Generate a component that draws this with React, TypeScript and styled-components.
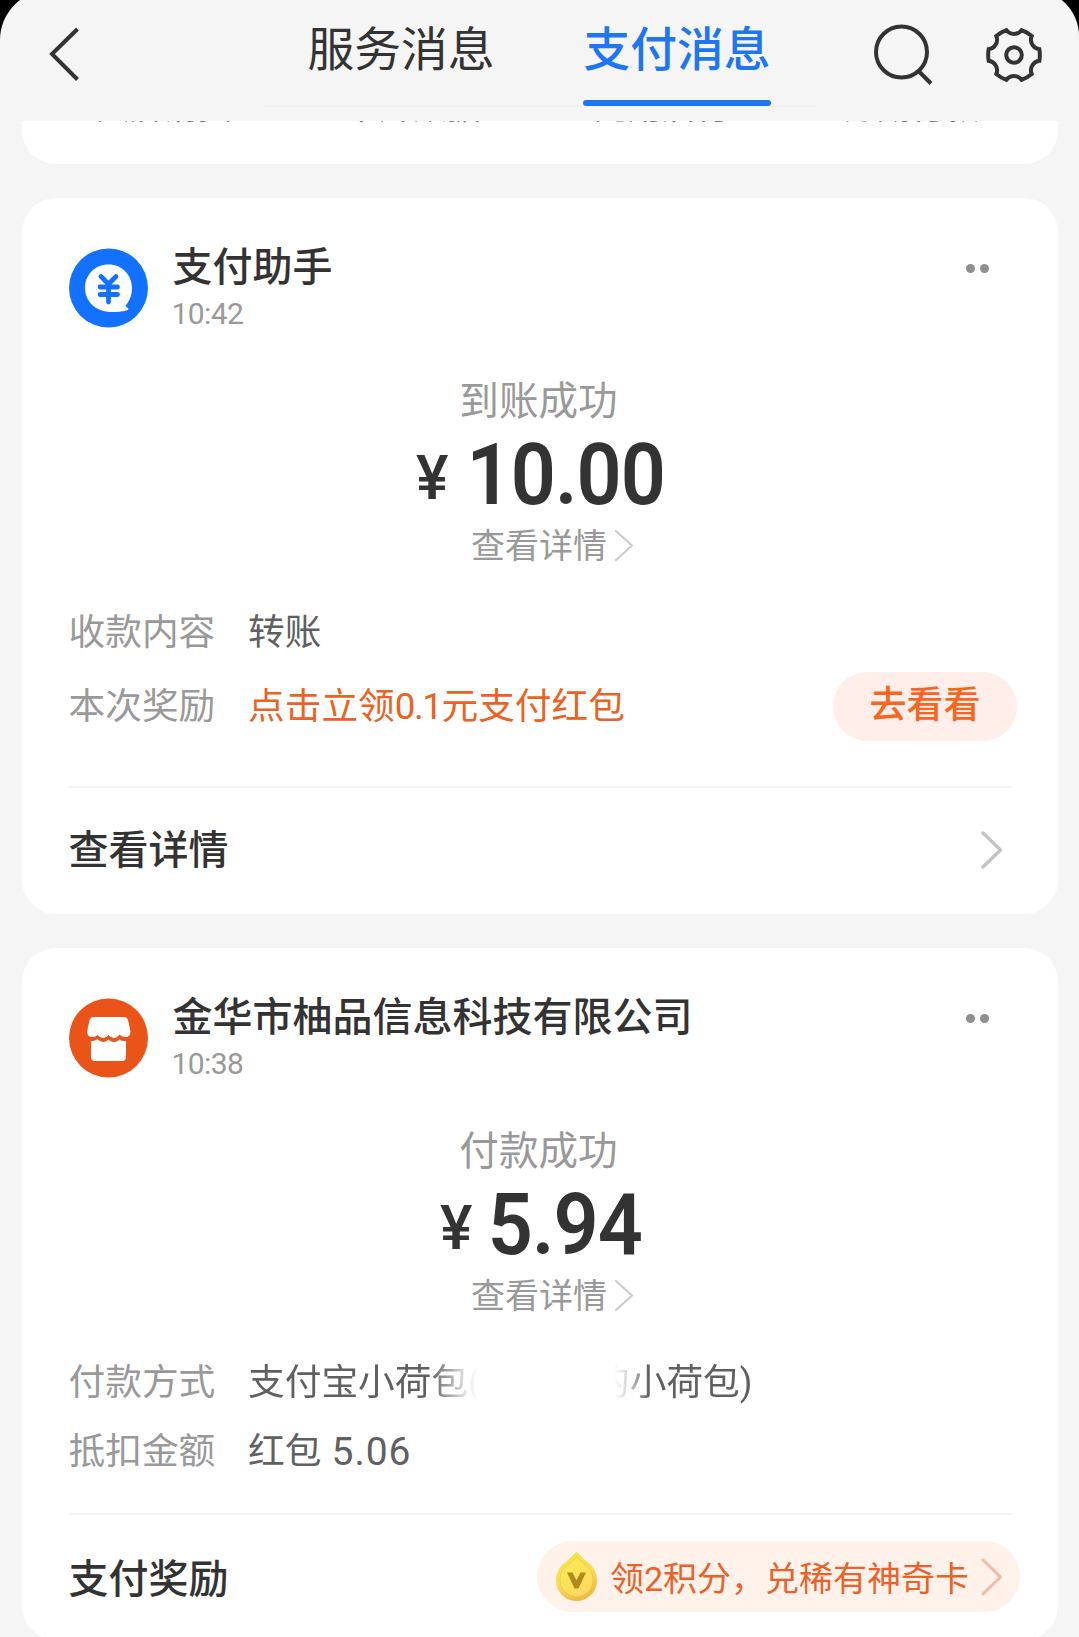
import React from "react";
import styled, { createGlobalStyle } from "styled-components";

const GlobalStyle = createGlobalStyle`
  *, *::before, *::after { box-sizing: border-box; }
  body {
    margin: 0;
    background: #000;
    font-family: Roboto, "Noto Sans CJK SC", sans-serif;
    color: #333;
  }
`;

const Screen = styled.main`
  width: 1079px;
  height: 1637px;
  overflow: hidden;
  display: flex;
  flex-direction: column;
  background: #f5f5f5;
`;

const Backdrop = styled.div`
  flex: none;
  height: 121px;
  overflow: hidden;
  background: #000;
`;

const Header = styled.header`
  height: 141px;
  margin-top: -10px;
  padding: 10px 36px 0 48px;
  border-radius: 50px 46px 0 0;
  background: #f5f5f5;
  display: flex;
  align-items: flex-start;
`;

const BackIcon = styled.svg`
  flex: none;
  margin-top: 26px;
`;

const Tabs = styled.nav`
  display: flex;
  width: 552px;
  height: 107px;
  margin-left: 182px;
  padding-left: 43px;
  border-bottom: 2px solid #f1f1f1;
`;

const Tab = styled.div<{ $active?: boolean }>`
  width: 188px;
  height: 106px;
  padding-top: 19px;
  margin-right: 88px;
  flex: none;
  text-align: center;
  white-space: nowrap;
  font-size: 46.8px;
  line-height: 62px;
  font-weight: ${(p) => (p.$active ? 500 : 400)};
  color: ${(p) => (p.$active ? "#1f77f0" : "#333")};

  &::after {
    content: "";
    display: block;
    height: 6px;
    margin-top: 18.5px;
    border-radius: 3px;
    background: ${(p) => (p.$active ? "#1f77f0" : "transparent")};
  }
`;

const Tools = styled.div`
  display: flex;
  gap: 50px;
  margin: 22px 0 0 56px;
`;

const Shortcuts = styled.section`
  flex: none;
  height: 43px;
  margin: 0 21px 0 22px;
  padding-left: 74px;
  border-radius: 0 0 34px 34px;
  background: #fff;
  overflow: hidden;
  display: flex;
  gap: 113px;
`;

const Shortcut = styled.span`
  flex: none;
  width: 136px;
  margin-top: -31px;
  font-size: 34px;
  line-height: 34px;
  color: #777;
  white-space: nowrap;
`;

const Card = styled.article<{ $height: number }>`
  flex: none;
  height: ${(p) => p.$height}px;
  margin: 34px 21px 0 22px;
  padding: 50px 41px 0 46px;
  border-radius: 34px;
  background: #fff;
  display: flex;
  flex-direction: column;
`;

const CardHead = styled.div`
  display: flex;
  height: 80px;
  padding-left: 1px;
`;

const HeadInfo = styled.div`
  flex: 1;
  margin: -2px 0 0 24.5px;
`;

const Sender = styled.h2`
  margin: 0;
  font-size: 40px;
  line-height: 44px;
  font-weight: 500;
`;

const Time = styled.time`
  display: block;
  margin: 8px 0 0 -1px;
  font-size: 30px;
  line-height: 32px;
  letter-spacing: -0.6px;
  color: #999;
`;

const More = styled.div`
  display: flex;
  gap: 5px;
  margin: 15.5px 28px 0 0;

  i {
    width: 9px;
    height: 9px;
    border-radius: 50%;
    background: #8f8f8f;
  }
`;

const Summary = styled.div`
  display: flex;
  flex-direction: column;
  align-items: center;
  margin-top: 52px;
  padding-right: 5px;
`;

const Status = styled.div`
  margin-right: 3px;
  font-size: 39.6px;
  line-height: 44px;
  color: #999;
`;

const Amount = styled.div`
  display: flex;
  align-items: center;
  height: 80px;
  margin-top: 11px;
  padding-left: 8px;
`;

const Yen = styled.span`
  padding-top: 7px;
  margin-right: 10px;
  font-size: 61px;
  line-height: 73px;
  font-weight: 500;
`;

const Digits = styled.span`
  font-size: 85px;
  line-height: 80px;
  font-weight: 600;
  letter-spacing: -1px;
  transform: scaleX(0.93);
`;

const DetailLink = styled.a`
  display: flex;
  align-items: center;
  gap: 7px;
  margin: 11px 0 39px 25px;
  font-size: 34px;
  line-height: 40px;
  color: #999;

  svg {
    margin-bottom: 2px;
  }
`;

const Row = styled.div<{ $gap?: number; $height?: number }>`
  display: flex;
  align-items: center;
  height: ${(p) => p.$height ?? 50}px;
  margin-top: ${(p) => p.$gap ?? 0}px;
  font-size: 36.7px;
  line-height: 50px;
  white-space: nowrap;
`;

const Label = styled.span<{ $drop?: number }>`
  width: 179.5px;
  margin-left: 0.5px;
  padding-top: ${(p) => p.$drop ?? 5}px;
  flex: none;
  color: #999;
`;

const Value = styled.span<{ $accent?: boolean }>`
  flex: 1;
  display: flex;
  padding-top: ${(p) => (p.$accent ? 2 : 5)}px;
  white-space: pre;
  color: ${(p) => (p.$accent ? "#ec6222" : "#606060")};
`;

const Tight = styled.span`
  letter-spacing: -1.4px;
`;

const Wide = styled.span`
  font-size: 39px;
  letter-spacing: 1px;
  margin-left: 1px;
`;

const FadeOut = styled.span`
  width: 230px;
  overflow: hidden;
  mask-image: linear-gradient(to right, #000 182px, rgba(0, 0, 0, 0.15) 219px, transparent 230px);
`;

const FadeIn = styled.span`
  margin-left: 115px;
  mask-image: linear-gradient(to right, transparent 21px, rgba(0, 0, 0, 0.25) 34px, #000 56px);
`;

const PillButton = styled.button`
  width: 184px;
  height: 69px;
  padding: 0 0 1px;
  border: 0;
  border-radius: 35px;
  background: #ffeee9;
  color: #f8651c;
  font: 500 37px/50px Roboto, "Noto Sans CJK SC", sans-serif;
`;

const Divider = styled.hr<{ $gap: number }>`
  flex: none;
  width: 943px;
  height: 2px;
  margin: ${(p) => p.$gap}px 0 0 1px;
  border: 0;
  background: #f4f4f4;
`;

const CardFoot = styled.div`
  flex: 1;
  display: flex;
  align-items: center;
  justify-content: space-between;
`;

const FootTitle = styled.strong<{ $drop?: number }>`
  padding-top: ${(p) => p.$drop ?? 0}px;
  padding-left: 0.5px;
  font-size: 40px;
  line-height: 50px;
  font-weight: 500;
`;

const FootArrow = styled.div`
  display: flex;
  margin: 0 15px 2px 0;
`;

const RewardPill = styled.div`
  display: flex;
  align-items: center;
  width: 483px;
  height: 71px;
  margin: 0 -3px 1px 0;
  padding-left: 18px;
  border-radius: 36px;
  background: #fff2eb;
  color: #e8622a;
  font-size: 34px;
  line-height: 50px;
  white-space: nowrap;

  span {
    flex: none;
    width: 357px;
    padding-top: 4px;
    margin: 0 14px 0 12px;
  }
`;

const Chevron = ({ w, h, color, stroke }: { w: number; h: number; color: string; stroke: number }) => (
  <svg width={w + 4} height={h + 4} viewBox={`-2 -2 ${w + 4} ${h + 4}`} fill="none">
    <path d={`M0 0L${w} ${h / 2}L0 ${h}`} stroke={color} strokeWidth={stroke} strokeLinecap="round" strokeLinejoin="round" />
  </svg>
);

const SearchIcon = () => (
  <svg width="62" height="64" viewBox="0 0 62 64" fill="none" stroke="#333" strokeWidth="4">
    <circle cx="29.5" cy="30" r="25.5" />
    <path d="M46.5 49L59 61.5" />
  </svg>
);

const gearPath = (() => {
  const at = (deg: number, r: number) => {
    const a = (deg * Math.PI) / 180;
    return `${(Math.sin(a) * r).toFixed(2)} ${(-Math.cos(a) * r).toFixed(2)}`;
  };
  let d = `M${at(-17, 26)}`;
  for (let i = 0; i < 6; i++) {
    const c = i * 60;
    d += `A9.5 9.5 0 0 0 ${at(c + 17, 26)}A34 34 0 0 1 ${at(c + 43, 26)}`;
  }
  return d + "Z";
})();

const GearIcon = () => (
  <svg width="60" height="60" viewBox="-30 -30 60 60" fill="none" stroke="#333" strokeWidth="4" style={{ marginTop: 3 }}>
    <path d={gearPath} />
    <circle r="7.8" />
  </svg>
);

const PayAvatar = () => (
  <svg width="79" height="80" viewBox="0 0 79 80">
    <circle cx="39.5" cy="40" r="39.5" fill="#1371ff" />
    <path d="M39.5 16.5C26 16.5 16 27 16 39.5C16 54 27 64 43 64C50 64 55 63.5 58.5 62C60 61 59.5 60 58 59.5L56.5 58C60.5 53 63 47 63 40C63 27 53 16.5 39.5 16.5Z" fill="#fff" />
    <path d="M32 28.5L39.5 36L47 28.5M39.5 36V54M31 39H48.5M31 46.5H48.5" fill="none" stroke="#1371ff" strokeWidth="4.8" strokeLinecap="round" />
  </svg>
);

const ShopAvatar = () => (
  <svg width="79" height="80" viewBox="0 0 79 80">
    <circle cx="39.5" cy="40" r="39.5" fill="#ea5419" />
    <path d="M25 19H55Q58 19 59 22L61.5 34Q61 39 56.500 39Q53 39 50.500 36.500Q48 40 45 40Q42 40 39.500 37Q37 40 34 40Q31 40 28.500 37Q26 39.500 23 39Q18.500 39 18 34L20.500 22Q21.500 19 25 19Z" fill="#fff" />
    <path d="M22 43Q26 43.500 28.500 41Q31 44 34 44Q37 44 39.500 41.500Q42 44 45 44Q48 44 50.500 41.500Q53 43.500 57 43V59Q57 63 53 63H26Q22 63 22 59Z" fill="#fff" />
  </svg>
);

const CoinIcon = () => (
  <svg width="43" height="51" viewBox="0 0 43 51">
    <defs>
      <linearGradient id="coin" x1="0" y1="0" x2="0.4" y2="1">
        <stop offset="0" stopColor="#f3e84f" />
        <stop offset="0.6" stopColor="#fbdb55" />
        <stop offset="1" stopColor="#eebd42" />
      </linearGradient>
      <linearGradient id="coinFace" x1="0" y1="0" x2="0.5" y2="1">
        <stop offset="0" stopColor="#f8f04e" />
        <stop offset="1" stopColor="#ffd863" />
      </linearGradient>
    </defs>
    <path d="M21.500 0.500L31 10Q42 17 42 29.500A20.500 20.500 0 0 1 1 29.500Q1 17 12 10Z" fill="url(#coin)" />
    <path d="M21.500 6L29 13Q38 19 38 29A16.500 16.500 0 0 1 5 29Q5 19 14 13Z" fill="url(#coinFace)" stroke="#ecc944" strokeWidth="0.8" />
    <path d="M12 21.500H17.500L21.500 29.500L25.500 21.500H31L23.500 37.500H19.500Z" fill="#b18a1c" />
  </svg>
);

const MessageHead = ({ icon, name, time }: { icon: React.ReactNode; name: string; time: string }) => (
  <CardHead>
    {icon}
    <HeadInfo>
      <Sender>{name}</Sender>
      <Time>{time}</Time>
    </HeadInfo>
    <More>
      <i />
      <i />
    </More>
  </CardHead>
);

const PaymentSummary = ({ status, amount }: { status: string; amount: string }) => (
  <Summary>
    <Status>{status}</Status>
    <Amount>
      <Yen>¥</Yen>
      <Digits>{amount}</Digits>
    </Amount>
    <DetailLink>
      查看详情
      <Chevron w={16} h={29} color="#ccc" stroke={2.2} />
    </DetailLink>
  </Summary>
);

export default function App() {
  return (
    <>
      <GlobalStyle />
      <Screen>
        <Backdrop>
          <Header>
            <BackIcon width="34" height="56" viewBox="0 0 34 56" fill="none">
              <path d="M29.500 3L4 28L29.500 53.500" stroke="#333" strokeWidth="4" />
            </BackIcon>
            <Tabs>
              <Tab>服务消息</Tab>
              <Tab $active>支付消息</Tab>
            </Tabs>
            <Tools>
              <SearchIcon />
              <GearIcon />
            </Tools>
          </Header>
        </Backdrop>

        <Shortcuts>
          <Shortcut>大牌消费</Shortcut>
          <Shortcut>卡片数据</Shortcut>
          <Shortcut>先用后付</Shortcut>
          <Shortcut>分期付款</Shortcut>
        </Shortcuts>

        <Card $height={716}>
          <MessageHead icon={<PayAvatar />} name="支付助手" time="10:42" />
          <PaymentSummary status="到账成功" amount="10.00" />
          <Row>
            <Label>收款内容</Label>
            <Value>转账</Value>
          </Row>
          <Row $gap={16.5} $height={69}>
            <Label $drop={2}>本次奖励</Label>
            <Value $accent>
              点击立领<Tight>0.1</Tight>元支付红包
            </Value>
            <PillButton>去看看</PillButton>
          </Row>
          <Divider $gap={45.5} />
          <CardFoot>
            <FootTitle>查看详情</FootTitle>
            <FootArrow>
              <Chevron w={17.5} h={34} color="#c4c4c4" stroke={3.4} />
            </FootArrow>
          </CardFoot>
        </Card>

        <Card $height={692}>
          <MessageHead icon={<ShopAvatar />} name="金华市柚品信息科技有限公司" time="10:38" />
          <PaymentSummary status="付款成功" amount="5.94" />
          <Row>
            <Label>付款方式</Label>
            <Value>
              <FadeOut>支付宝小荷包(</FadeOut>
              <FadeIn>的小荷包)</FadeIn>
            </Value>
          </Row>
          <Row $gap={19.5}>
            <Label>抵扣金额</Label>
            <Value>
              红包 <Wide>5.06</Wide>
            </Value>
          </Row>
          <Divider $gap={38} />
          <CardFoot>
            <FootTitle $drop={5}>支付奖励</FootTitle>
            <RewardPill>
              <CoinIcon />
              <span>领2积分，兑稀有神奇卡</span>
              <Chevron w={17.5} h={34} color="#f5b9a3" stroke={3} />
            </RewardPill>
          </CardFoot>
        </Card>
      </Screen>
    </>
  );
}
